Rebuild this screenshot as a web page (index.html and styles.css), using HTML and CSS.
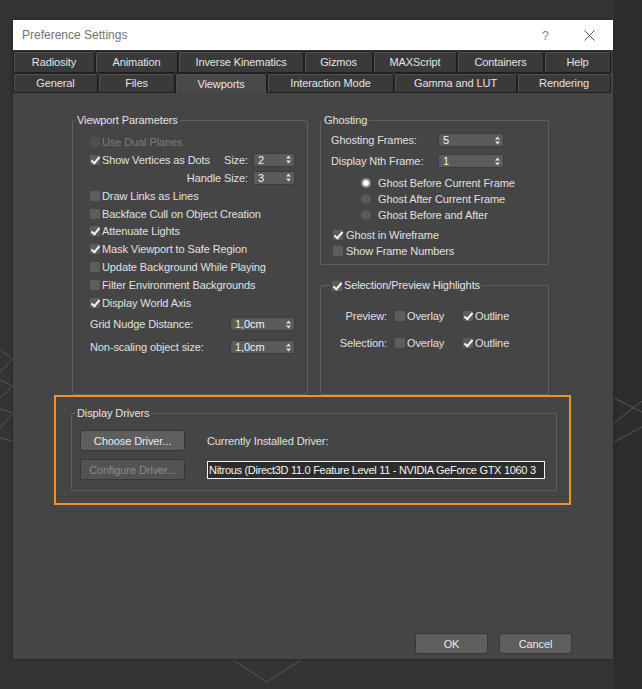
FILE: index.html
```html
<!DOCTYPE html>
<html lang="en">
<head>
    <meta charset="UTF-8">
    <title>Preference Settings</title>
    <link rel="stylesheet" href="styles.css">
</head>
<body>
    <svg class="backdrop" width="642" height="689" viewBox="0 0 642 689">
        <g stroke="#575757" stroke-width="1" fill="none">
            <path d="M0 350 L13 359 M0 372 L13 359 M0 380 L13 386 M0 398 L13 386 M0 409 L13 413 M0 428 L13 413 M0 438 L13 441"/>
            <path d="M614 398 L642 412 M614 423 L642 401 M614 442 L642 427"/>
            <path d="M233 660 L267 682 L301 660"/>
        </g>
    </svg>

    <div class="dialog">
        <div class="titlebar">
            <span class="title">Preference Settings</span>
            <span class="title-help">?</span>
            <svg class="title-close" width="11" height="11" viewBox="0 0 11 11">
                <path d="M0.5 0.5 L10.5 10.5 M10.5 0.5 L0.5 10.5" stroke="#555" stroke-width="1"/>
            </svg>
        </div>

        <div class="tabs">
            <div class="tab-row row-top">
                <div class="tab">Radiosity</div>
                <div class="tab">Animation</div>
                <div class="tab">Inverse Kinematics</div>
                <div class="tab">Gizmos</div>
                <div class="tab">MAXScript</div>
                <div class="tab">Containers</div>
                <div class="tab">Help</div>
            </div>
            <div class="tab-row row-bottom">
                <div class="tab">General</div>
                <div class="tab">Files</div>
                <div class="tab active">Viewports</div>
                <div class="tab">Interaction Mode</div>
                <div class="tab">Gamma and LUT</div>
                <div class="tab">Rendering</div>
            </div>
        </div>

        <div class="page">
            <div class="columns">
                <fieldset class="group group-viewport">
                    <legend>Viewport Parameters</legend>
                    <div class="group-body">
                        <div class="row"><span class="check disabled"></span><span class="label disabled">Use Dual Planes</span></div>
                        <div class="row">
                            <span class="check on"></span><span class="label">Show Vertices as Dots</span>
                            <span class="row-end">Size: <span class="spin spin-small">2<svg class="spin-arrows" width="5" height="9" viewBox="0 0 5 9"><path d="M0 3.5 L2.5 0.5 L5 3.5 Z M0 5.5 L2.5 8.5 L5 5.5 Z" fill="#e0e0e0"/></svg></span></span>
                        </div>
                        <div class="row">
                            <span class="row-end">Handle Size: <span class="spin spin-small">3<svg class="spin-arrows" width="5" height="9" viewBox="0 0 5 9"><path d="M0 3.5 L2.5 0.5 L5 3.5 Z M0 5.5 L2.5 8.5 L5 5.5 Z" fill="#e0e0e0"/></svg></span></span>
                        </div>
                        <div class="row"><span class="check"></span><span class="label">Draw Links as Lines</span></div>
                        <div class="row"><span class="check"></span><span class="label">Backface Cull on Object Creation</span></div>
                        <div class="row"><span class="check on"></span><span class="label">Attenuate Lights</span></div>
                        <div class="row"><span class="check on"></span><span class="label">Mask Viewport to Safe Region</span></div>
                        <div class="row"><span class="check"></span><span class="label">Update Background While Playing</span></div>
                        <div class="row"><span class="check"></span><span class="label">Filter Environment Backgrounds</span></div>
                        <div class="row"><span class="check on"></span><span class="label">Display World Axis</span></div>
                        <div class="row row-field">
                            <span class="label">Grid Nudge Distance:</span>
                            <span class="spin spin-wide">1,0cm<svg class="spin-arrows" width="5" height="9" viewBox="0 0 5 9"><path d="M0 3.5 L2.5 0.5 L5 3.5 Z M0 5.5 L2.5 8.5 L5 5.5 Z" fill="#e0e0e0"/></svg></span>
                        </div>
                        <div class="row row-field">
                            <span class="label">Non-scaling object size:</span>
                            <span class="spin spin-wide">1,0cm<svg class="spin-arrows" width="5" height="9" viewBox="0 0 5 9"><path d="M0 3.5 L2.5 0.5 L5 3.5 Z M0 5.5 L2.5 8.5 L5 5.5 Z" fill="#e0e0e0"/></svg></span>
                        </div>
                    </div>
                </fieldset>

                <div class="right-col">
                    <fieldset class="group group-ghosting">
                        <legend>Ghosting</legend>
                        <div class="group-body">
                            <div class="ghost-field">
                                <span class="label">Ghosting Frames:</span>
                                <span class="spin spin-ghost">5<svg class="spin-arrows" width="5" height="9" viewBox="0 0 5 9"><path d="M0 3.5 L2.5 0.5 L5 3.5 Z M0 5.5 L2.5 8.5 L5 5.5 Z" fill="#e0e0e0"/></svg></span>
                            </div>
                            <div class="ghost-field">
                                <span class="label">Display Nth Frame:</span>
                                <span class="spin spin-ghost">1<svg class="spin-arrows" width="5" height="9" viewBox="0 0 5 9"><path d="M0 3.5 L2.5 0.5 L5 3.5 Z M0 5.5 L2.5 8.5 L5 5.5 Z" fill="#e0e0e0"/></svg></span>
                            </div>
                            <div class="radios">
                                <div class="radio-row"><span class="radio on"></span><span class="label">Ghost Before Current Frame</span></div>
                                <div class="radio-row"><span class="radio"></span><span class="label">Ghost After Current Frame</span></div>
                                <div class="radio-row"><span class="radio"></span><span class="label">Ghost Before and After</span></div>
                            </div>
                            <div class="ghost-checks">
                                <div class="radio-row"><span class="check on"></span><span class="label">Ghost in Wireframe</span></div>
                                <div class="radio-row"><span class="check"></span><span class="label">Show Frame Numbers</span></div>
                            </div>
                        </div>
                    </fieldset>

                    <fieldset class="group group-highlights">
                        <legend><span class="check on"></span><span class="label">Selection/Preview Highlights</span></legend>
                        <div class="group-body highlight-grid">
                            <span class="hl-label">Preview:</span>
                            <span class="hl-option"><span class="check"></span><span class="label">Overlay</span></span>
                            <span class="hl-option"><span class="check on"></span><span class="label">Outline</span></span>
                            <span class="hl-label">Selection:</span>
                            <span class="hl-option"><span class="check"></span><span class="label">Overlay</span></span>
                            <span class="hl-option"><span class="check on"></span><span class="label">Outline</span></span>
                        </div>
                    </fieldset>
                </div>
            </div>

            <div class="callout">
                <fieldset class="group group-drivers">
                    <legend>Display Drivers</legend>
                    <div class="group-body drivers-grid">
                        <button class="btn btn-driver">Choose Driver...</button>
                        <span class="label">Currently Installed Driver:</span>
                        <button class="btn btn-driver" disabled>Configure Driver...</button>
                        <div class="driver-field">Nitrous (Direct3D 11.0 Feature Level 11 - NVIDIA GeForce GTX 1060 3</div>
                    </div>
                </fieldset>
            </div>
        </div>

        <div class="footer">
            <button class="btn btn-footer">OK</button>
            <button class="btn btn-footer">Cancel</button>
        </div>
    </div>
</body>
</html>
```

FILE: styles.css
```css
* {
    margin: 0;
    padding: 0;
    box-sizing: border-box;
}

body {
    width: 642px;
    height: 689px;
    overflow: hidden;
    position: relative;
    font-family: 'Liberation Sans', Arial, sans-serif;
    font-size: 11px;
    letter-spacing: -0.1px;
    color: #e0e0e0;
    background: linear-gradient(to right, #343434 0, #343434 614px, #2d2d2d 614px);
}

.backdrop {
    position: absolute;
    top: 0;
    left: 0;
}

.dialog {
    position: relative;
    width: 600px;
    height: 639px;
    margin: 20px 0 0 13px;
    background: #454545;
    display: flex;
    flex-direction: column;
    box-shadow: 0 0 4px rgba(0, 0, 0, 0.35);
}

/* title bar */
.titlebar {
    height: 30px;
    background: #fff;
    display: flex;
    align-items: center;
    padding-left: 9px;
}

.title {
    flex: 1;
    font-size: 12px;
    letter-spacing: 0;
    color: #727272;
}

.title-help {
    font-size: 13px;
    color: #8a8a8a;
    margin-right: 35px;
}

.title-close {
    margin-right: 18px;
}

/* tabs */
.tabs {
    background: #3a3a3a;
    padding-top: 1px;
}

.tab-row {
    display: grid;
}

.row-top {
    height: 22px;
    grid-template-columns: 82px 83px 126px 69px 84px 87px 67px;
}

.row-bottom {
    height: 19px;
    grid-template-columns: 85px 77px 92px 127px 123px 94px;
    background: #454545;
}

.tab {
    display: flex;
    align-items: center;
    justify-content: center;
    background: #3a3a3a;
    border: 1px solid #1f1f1f;
    border-radius: 3px 3px 0 0;
    box-shadow: inset 1px 1px 0 #535353;
    color: #e4e4e4;
    white-space: nowrap;
}

.tab.active {
    background: #494949;
    border-bottom: none;
    height: 20px;
    position: relative;
    z-index: 1;
}

/* page */
.page {
    padding: 22px 0 0 41px;
}

.columns {
    display: grid;
    grid-template-columns: 236px 229px;
    column-gap: 12px;
    height: 281px;
    margin-left: 18px;
}

.group {
    border: 1px solid #5f5f5f;
    border-radius: 2px;
    min-width: 0;
}

.group legend {
    font-size: 11px;
    line-height: 13px;
    padding: 0 2px;
    color: #e4e4e4;
}

.group-viewport legend {
    margin-left: 2px;
}

.group-viewport .group-body {
    padding: 6px 12px 0 17px;
}

.row {
    display: flex;
    align-items: center;
    height: 17.9px;
}

.row-end {
    margin-left: auto;
    display: flex;
    align-items: center;
    gap: 5px;
}

.row-field {
    height: 21px;
    margin-top: 2px;
    justify-content: space-between;
}

.label {
    white-space: nowrap;
}

.label.disabled {
    color: #7c7c7c;
}

/* checkbox */
.check {
    position: relative;
    flex: none;
    width: 10px;
    height: 10px;
    margin-right: 2px;
    background: #5d5d5d;
    border-radius: 1px;
}

.check.disabled {
    background: #4f4f4f;
}

.check.on::after {
    content: "";
    position: absolute;
    left: 3px;
    top: 0;
    width: 3px;
    height: 7px;
    border: solid #f4f4f4;
    border-width: 0 2px 2px 0;
    transform: rotate(40deg);
}

/* radio */
.radio {
    flex: none;
    width: 10px;
    height: 10px;
    border-radius: 50%;
    background: #595959;
    margin-right: 7px;
}

.radio.on {
    background: radial-gradient(circle, #fafafa 0, #fafafa 2.5px, #8c8c8c 3.5px);
}

/* spinner */
.spin {
    display: flex;
    align-items: center;
    height: 14px;
    padding-left: 4px;
    background: #5b5b5b;
    border: 1px solid #3c3c3c;
    border-radius: 2px;
    color: #f2f2f2;
}

.spin-arrows {
    margin-left: auto;
    margin-right: 3px;
}

.spin-small {
    width: 42px;
}

.spin-wide {
    width: 65px;
}

.spin-ghost {
    width: 66px;
}

/* right column */
.right-col {
    display: flex;
    flex-direction: column;
    gap: 14px;
}

.group-ghosting {
    height: 151px;
}

.group-ghosting legend {
    margin-left: 1px;
}

.group-ghosting .group-body {
    padding: 4px 0 0 10px;
}

.ghost-field {
    display: grid;
    grid-template-columns: 107px 66px;
    align-items: center;
    height: 18px;
    margin-bottom: 3px;
}

.radios {
    padding: 2px 0 0 30px;
}

.radio-row {
    display: flex;
    align-items: center;
    height: 16px;
}

.ghost-checks {
    margin-top: 4px;
    padding-left: 2px;
}

.ghost-checks .check {
    margin-right: 3px;
}

.group-highlights {
    flex: 1;
}

.group-highlights legend {
    display: flex;
    align-items: center;
    margin-left: 9px;
}

.highlight-grid {
    display: grid;
    grid-template-columns: 66px 68px auto;
    grid-auto-rows: 18px;
    row-gap: 9px;
    align-items: center;
    padding-top: 15px;
}

.hl-label {
    text-align: right;
}

.hl-option {
    display: flex;
    align-items: center;
    padding-left: 8px;
}

.hl-option .check {
    margin-right: 2px;
}

/* display drivers callout */
.callout {
    width: 517px;
    height: 110px;
    border: 2px solid #f0912e;
    padding: 10px 12px 12px 15px;
}

.group-drivers legend {
    margin-left: 3px;
}

.drivers-grid {
    display: grid;
    grid-template-columns: 105px 338px;
    grid-template-rows: 21px 21px;
    column-gap: 22px;
    row-gap: 8px;
    align-items: center;
    padding: 10px 0 10px 8px;
}

.btn {
    font-family: 'Liberation Sans', Arial, sans-serif;
    font-size: 11px;
    letter-spacing: -0.1px;
    color: #ececec;
    background: #5e5e5e;
    border: 1px solid #373737;
    border-radius: 3px;
    height: 21px;
}

.btn:disabled {
    color: #8a8a8a;
    background: #535353;
}

.btn-driver {
    width: 105px;
}

.driver-field {
    height: 18px;
    line-height: 16px;
    border: 1px solid #f2f2f2;
    background: #2c2c2c;
    color: #f4f4f4;
    padding-left: 1px;
    letter-spacing: -0.3px;
    white-space: nowrap;
    overflow: hidden;
}

/* footer */
.footer {
    margin-top: auto;
    display: flex;
    justify-content: flex-end;
    gap: 11px;
    padding: 0 41px 5px 0;
}

.btn-footer {
    width: 73px;
}
```
